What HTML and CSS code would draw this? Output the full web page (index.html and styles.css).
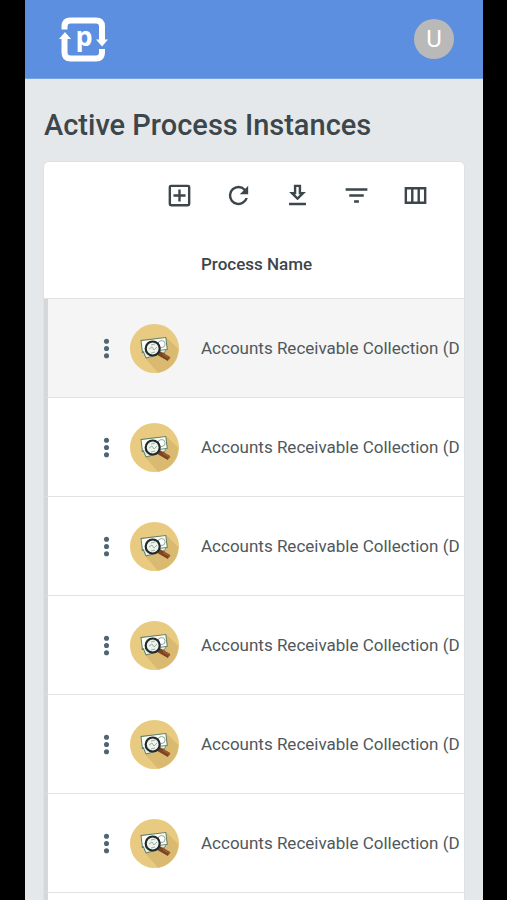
FILE: index.html
```html
<!DOCTYPE html>
<html lang="en">
  <head>
    <meta charset="UTF-8">
    <meta name="viewport" content="width=device-width, initial-scale=1">
    <title>Active Process Instances</title>
    <link rel="stylesheet" href="styles.css">
  </head>
  <body>
    <!-- shared icons -->
    <svg class="sprite" aria-hidden="true">
      <symbol id="more" viewBox="0 0 24 24">
        <circle cx="12" cy="6" r="2.1"/>
        <circle cx="12" cy="12" r="2.1"/>
        <circle cx="12" cy="18" r="2.1"/>
      </symbol>
      <symbol id="receivable" viewBox="0 0 49 49">
        <circle cx="24.5" cy="24.5" r="24.5" fill="#e8cb80"/>
        <path d="M15 34 L37 14 L48.3 25 A24.5 24.5 0 0 1 28 48.7 Z" fill="#d9ba70"/>
        <g transform="rotate(8 24 24)">
          <path d="M13 18h22v12H13z" fill="#fbfcf6" stroke="#5c7d69"/>
          <circle cx="32" cy="24" r="4" fill="#e9efe6" stroke="#7f9987"/>
        </g>
        <g transform="rotate(-7 24 24)">
          <path d="M12 15h25v12H12z" fill="#fbfcf6" stroke="#5c7d69"/>
          <circle cx="32" cy="21" r="3.5" fill="#fff" stroke="#7f9987" stroke-width=".8"/>
        </g>
        <path d="M13 27l3 7 11-3" fill="#e9efe4" stroke="#5c7d69"/>
        <path d="M28.500 29l10.500 6" stroke="#7c431f" stroke-width="4.500"/>
        <path d="M33 30.500l7 4" stroke="#9a5a2e" stroke-width="1.500"/>
        <circle cx="22.700" cy="24.500" r="7" fill="#eef3ec" stroke="#20292c" stroke-width="2.200"/>
        <path d="M19 25l3-2 2 3 3-3M21 29l4-1M21 21l4-1" fill="none" stroke="#9fb3a4"/>
      </symbol>
    </svg>

    <div class="screen">
      <header class="topbar">
        <a class="logo" href="#" aria-label="Home">
          <svg width="50" height="48" viewBox="0 0 50 48">
            <g fill="none" stroke="#fff" stroke-width="6">
              <path d="M6.500 14.500V11.500Q6.500 5.500 12.500 5.500H38Q44 5.500 44 11.500V25.500"/>
              <path d="M44 34V37.500Q44 43.500 38 43.500H12.500Q6.500 43.500 6.500 37.500V22.500"/>
            </g>
            <path d="M7 17l6 7H1z M44 31.500l-6-7h12z" fill="#fff"/>
            <text class="logo-letter" x="26" y="31" text-anchor="middle">p</text>
          </svg>
        </a>
        <button class="avatar" type="button" aria-label="User menu">U</button>
      </header>

      <main>
        <h1>Active Process Instances</h1>
        <section class="card">
          <div class="toolbar">
            <button type="button" aria-label="Add">
              <svg viewBox="0 0 24 24"><path d="M19 3H5a2 2 0 0 0-2 2v14a2 2 0 0 0 2 2h14a2 2 0 0 0 2-2V5a2 2 0 0 0-2-2zm0 16H5V5h14v14zm-8-2h2v-4h4v-2h-4V7h-2v4H7v2h4z"/></svg>
            </button>
            <button type="button" aria-label="Refresh">
              <svg viewBox="0 0 24 24"><path d="M17.650 6.350A7.960 7.960 0 0 0 12 4a8 8 0 1 0 7.730 10h-2.080A6 6 0 1 1 12 6c1.660 0 3.140.690 4.220 1.780L13 11h7V4l-2.350 2.350z"/></svg>
            </button>
            <button type="button" aria-label="Download">
              <svg viewBox="0 0 24 24"><path d="M19 9h-4V3H9v6H5l7 7 7-7zm-8 2V5h2v6h1.170L12 13.170 9.830 11H11zm-6 7h14v2H5z"/></svg>
            </button>
            <button type="button" aria-label="Filter">
              <svg viewBox="0 0 24 24"><path d="M10 18h4v-2h-4v2zM3 6v2h18V6H3zm3 7h12v-2H6v2z"/></svg>
            </button>
            <button type="button" aria-label="Columns">
              <svg viewBox="0 0 24 24"><path d="M3 5v14h18V5H3zm5.330 12H5V7h3.330v10zm5.340 0h-3.340V7h3.340v10zM19 17h-3.330V7H19v10z"/></svg>
            </button>
          </div>
          <table>
            <thead>
              <tr>
                <th class="menu"></th>
                <th class="icon"></th>
                <th scope="col">Process Name</th>
              </tr>
            </thead>
            <tbody>
              <tr class="active">
                <td class="menu"><button type="button" aria-label="Actions"><svg><use href="#more"/></svg></button></td>
                <td class="icon"><svg><use href="#receivable"/></svg></td>
                <td>Accounts Receivable Collection (D</td>
              </tr>
              <tr>
                <td class="menu"><button type="button" aria-label="Actions"><svg><use href="#more"/></svg></button></td>
                <td class="icon"><svg><use href="#receivable"/></svg></td>
                <td>Accounts Receivable Collection (D</td>
              </tr>
              <tr>
                <td class="menu"><button type="button" aria-label="Actions"><svg><use href="#more"/></svg></button></td>
                <td class="icon"><svg><use href="#receivable"/></svg></td>
                <td>Accounts Receivable Collection (D</td>
              </tr>
              <tr>
                <td class="menu"><button type="button" aria-label="Actions"><svg><use href="#more"/></svg></button></td>
                <td class="icon"><svg><use href="#receivable"/></svg></td>
                <td>Accounts Receivable Collection (D</td>
              </tr>
              <tr>
                <td class="menu"><button type="button" aria-label="Actions"><svg><use href="#more"/></svg></button></td>
                <td class="icon"><svg><use href="#receivable"/></svg></td>
                <td>Accounts Receivable Collection (D</td>
              </tr>
              <tr>
                <td class="menu"><button type="button" aria-label="Actions"><svg><use href="#more"/></svg></button></td>
                <td class="icon"><svg><use href="#receivable"/></svg></td>
                <td>Accounts Receivable Collection (D</td>
              </tr>
              <tr>
                <td class="menu"></td>
                <td class="icon"></td>
                <td></td>
              </tr>
            </tbody>
          </table>
        </section>
      </main>
    </div>
  </body>
</html>
```
FILE: styles.css
```css
* {
  box-sizing: border-box;
}
html {
  scrollbar-width: none;
}
body {
  margin: 0;
  background: #000;
  color: #3c464b;
  font-family: Roboto, "Liberation Sans", sans-serif;
  font-size: 17px;
}
button {
  border: 0;
  padding: 0;
  background: none;
  color: inherit;
  font: inherit;
  cursor: pointer;
}
svg {
  display: block;
  fill: currentColor;
}
.sprite {
  display: none;
}
.screen {
  min-height: 100vh;
  margin: 0 24px 0 25px;
  background: #e4e8eb;
}

.topbar {
  display: flex;
  align-items: center;
  justify-content: space-between;
  height: 79px;
  padding: 0 29px 0 33px;
  background: #5c8fdf;
  border-bottom: 1px solid #79a2e3;
}
.logo-letter {
  font: bold 27px "Open Sans", sans-serif;
  fill: #fff;
}
.avatar {
  width: 40px;
  height: 40px;
  border-radius: 50%;
  background: #b9b9b9;
  color: #fff;
  font-size: 24px;
}

main {
  padding: 28px 19px 0;
}
h1 {
  margin: 0 0 19px;
  font-size: 29px;
  font-weight: 500;
  line-height: 36px;
}

.card {
  overflow: hidden;
  background: #fff;
  border-radius: 5px;
  box-shadow: 0 0 0 1px #dfe2e4;
}
.toolbar {
  display: flex;
  justify-content: flex-end;
  gap: 11px;
  height: 67px;
  padding-right: 25px;
}
.toolbar button {
  display: grid;
  place-items: center;
  width: 48px;
}
.toolbar svg,
.menu svg {
  width: 29px;
  height: 29px;
}

table {
  width: 100%;
  border-collapse: separate;
  border-spacing: 0;
  white-space: nowrap;
}
th {
  height: 70px;
  padding: 0;
  border-bottom: 1px solid #e0e2e3;
  font-weight: 500;
  text-align: left;
}
td {
  height: 99px;
  padding: 0;
  border-bottom: 1px solid #e0e2e3;
  color: #50585c;
}
td.menu {
  border-left: 4px solid #d5d8da;
}
.menu {
  width: 86px;
}
.menu button {
  display: block;
  margin-left: auto;
  margin-right: 9px;
  color: #4f6572;
}
.icon {
  width: 71px;
}
.icon svg {
  width: 49px;
  height: 49px;
}
.active td {
  background: #f5f5f5;
}
```
